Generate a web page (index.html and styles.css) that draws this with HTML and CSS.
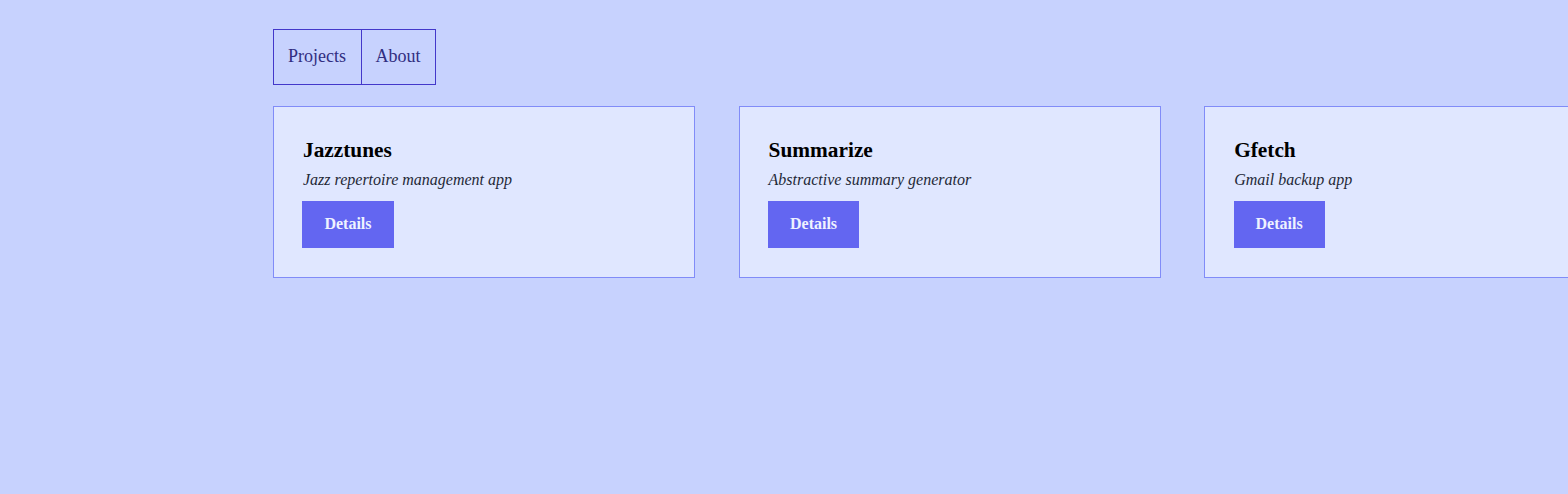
FILE: index.html
```html
<!DOCTYPE html>
<html lang="en">
<head>
<meta charset="utf-8">
<title>Projects</title>
<link rel="stylesheet" href="styles.css">
</head>
<body>
<div class="page">
  <nav class="nav">
    <a class="nav-item" href="#">Projects</a>
    <a class="nav-item" href="#">About</a>
  </nav>
  <main class="cards">
    <section class="card">
      <h2 class="card-title">Jazztunes</h2>
      <p class="card-desc">Jazz repertoire management app</p>
      <a class="btn" href="#">Details</a>
    </section>
    <section class="card">
      <h2 class="card-title">Summarize</h2>
      <p class="card-desc">Abstractive summary generator</p>
      <a class="btn" href="#">Details</a>
    </section>
    <section class="card">
      <h2 class="card-title">Gfetch</h2>
      <p class="card-desc">Gmail backup app</p>
      <a class="btn" href="#">Details</a>
    </section>
  </main>
</div>
</body>
</html>
```

FILE: styles.css
```css
html, body {
  margin: 0;
  padding: 0;
}
body {
  background: #c7d2fe;
  font-family: "Liberation Serif", "Times New Roman", serif;
  overflow: hidden;
  height: 494px;
}
.page {
  padding: 29px 0 0 273px;
  display: flex;
  flex-direction: column;
  align-items: flex-start;
  gap: 21px;
}
.nav {
  display: flex;
  border: 1px solid #4338ca;
}
.nav-item {
  display: block;
  padding: 16px 14.6px 18px 14px;
  font-size: 18px;
  line-height: 20px;
  color: #312e81;
  text-decoration: none;
}
.nav-item + .nav-item {
  border-left: 1px solid #4338ca;
  padding-right: 14.2px;
}
.cards {
  display: flex;
  gap: 43.3px;
  width: max-content;
}
.card {
  flex: 0 0 auto;
  width: 363.5px;
  padding: 29px 28.4px 29px 28.4px;
  border: 1px solid #818cf8;
  background: #e0e7ff;
  display: flex;
  flex-direction: column;
  align-items: flex-start;
}
.card-title {
  margin: 0;
  font-size: 21.33px;
  line-height: 28px;
  font-weight: bold;
  color: #000;
  padding-left: 0.6px;
}
.card-desc {
  margin: 6px 0 0 0;
  font-size: 16px;
  line-height: 19px;
  font-style: italic;
  color: #1f2937;
  padding-left: 0.6px;
}
.btn {
  margin-top: 12px;
  display: block;
  padding: 13px 22px 15px 22px;
  font-size: 16px;
  line-height: 19px;
  font-weight: bold;
  color: #eef2ff;
  background: #6366f1;
  text-decoration: none;
}
```
